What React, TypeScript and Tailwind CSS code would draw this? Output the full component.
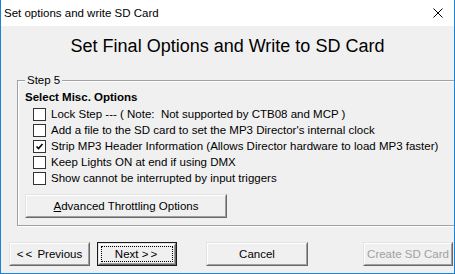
const options = [
  { label: "Lock Step --- ( Note:  Not supported by CTB08 and MCP )", checked: false },
  { label: "Add a file to the SD card to set the MP3 Director's internal clock", checked: false },
  { label: "Strip MP3 Header Information (Allows Director hardware to load MP3 faster)", checked: true },
  { label: "Keep Lights ON at end if using DMX", checked: false },
  { label: "Show cannot be interrupted by input triggers", checked: false },
];

function CheckBox({ checked }: { checked: boolean }) {
  return (
    <div className="w-[13px] h-[13px] border border-[#333333] bg-white flex items-center justify-center shrink-0">
      {checked && (
        <svg width="9" height="9" viewBox="0 0 9 9">
          <path d="M1.5 4.5 L3.5 6.5 L7.5 2" stroke="#000" strokeWidth="1.6" fill="none" />
        </svg>
      )}
    </div>
  );
}

function Button({
  children,
  className = "",
  isDefault = false,
  disabled = false,
}: {
  children: React.ReactNode;
  className?: string;
  isDefault?: boolean;
  disabled?: boolean;
}) {
  return (
    <div className={`h-[24px] flex ${isDefault ? "border border-[#1a1a1a]" : ""} ${className}`}>
      <div className="flex-1 border border-t-[#e3e3e3] border-l-[#e3e3e3] border-r-[#696969] border-b-[#696969] flex">
        <div
          className={`flex-1 border border-t-white border-l-white border-r-[#a0a0a0] border-b-[#a0a0a0] bg-[#f0f0f0] flex items-center justify-center ${
            disabled ? "text-[#a0a0a0]" : "text-black"
          }`}
        >
          {isDefault ? (
            <div className="flex-1 self-stretch m-[1px] border border-dotted border-black flex items-center justify-center">
              {children}
            </div>
          ) : (
            children
          )}
        </div>
      </div>
    </div>
  );
}

export default function App() {
  return (
    <div className="w-[455px] h-[274px] bg-[#f0f0f0] border-x border-b border-[#1883d7] flex flex-col overflow-hidden font-['Liberation_Sans',Arial,sans-serif] text-[11.5px] leading-[16px] text-black">
      {/* title bar */}
      <div className="h-[26px] bg-white flex items-center justify-between pl-[3px] pr-[11px] shrink-0">
        <span>Set options and write SD Card</span>
        <svg width="10" height="10" viewBox="0 0 10 10">
          <path d="M0.5 0.5 L9.5 9.5 M9.5 0.5 L0.5 9.5" stroke="#000" strokeWidth="1" />
        </svg>
      </div>

      {/* heading */}
      <div className="h-[47px] flex items-center justify-center pb-[7px] text-[18px]">
        Set Final Options and Write to SD Card
      </div>

      {/* group box */}
      <div className="relative ml-[16px] mt-[7px] w-[460px] h-[146px] border border-[#a0a0a0] shadow-[inset_1px_1px_0_#fff,1px_1px_0_#fff] shrink-0">
        <span className="absolute left-[7px] -top-[9px] px-[2px] bg-[#f0f0f0]">Step 5</span>
        <div className="pl-[7px] pt-[8px] font-bold">Select Misc. Options</div>
        <div className="flex flex-col pt-[1px]">
          {options.map((o) => (
            <div key={o.label} className="h-[16px] flex items-center pl-[15px] gap-[5px] whitespace-pre">
              <CheckBox checked={o.checked} />
              <span>{o.label}</span>
            </div>
          ))}
        </div>
        <Button className="ml-[7px] mt-[8px] w-[202px]">
          <span>
            <span className="underline">A</span>dvanced Throttling Options
          </span>
        </Button>
      </div>

      {/* bottom buttons */}
      <div className="flex items-center mt-[16px] pl-[8px]">
        <Button className="w-[81px]">
          <span>
            <span className="tracking-[2px]">&lt;&lt;</span> Previous
          </span>
        </Button>
        <Button className="w-[80px] ml-[7px]" isDefault>
          <span>
            Next <span className="tracking-[2px]">&gt;&gt;</span>
          </span>
        </Button>
        <Button className="w-[102px] ml-[29px]">Cancel</Button>
        <Button className="w-[90px] ml-[55px]" disabled>
          Create SD Card
        </Button>
      </div>
    </div>
  );
}
